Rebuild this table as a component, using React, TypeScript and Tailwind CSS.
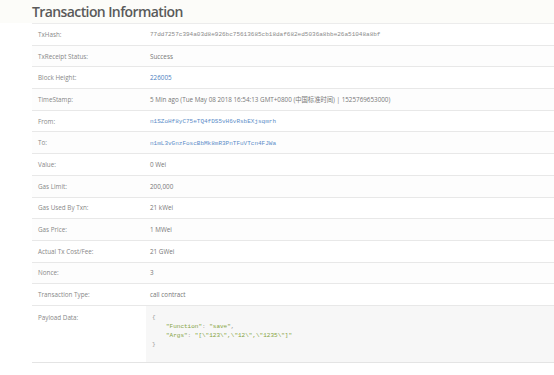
import React from 'react';

type Row = { label: string; value: string; kind?: 'text' | 'mono' | 'link' | 'linkText' };

const rows: Row[] = [
  { label: 'TxHash:', value: '77dd7257c394a03d8e926bc75613685cb18daf682ed5036a8bbe26a51048a8bf', kind: 'mono' },
  { label: 'TxReceipt Status:', value: 'Success' },
  { label: 'Block Height:', value: '226005', kind: 'linkText' },
  { label: 'TimeStamp:', value: '5 Min ago (Tue May 08 2018 16:54:13 GMT+0800 (中国标准时间) | 1525769653000)' },
  { label: 'From:', value: 'n1SZoHf8yC75eTQ4fDS5vH6vRsbEXjsqmrh', kind: 'link' },
  { label: 'To:', value: 'n1mL3vGnzFoscBbMk8mR3PnTFuVTcn4FJWa', kind: 'link' },
  { label: 'Value:', value: '0 Wei' },
  { label: 'Gas Limit:', value: '200,000' },
  { label: 'Gas Used By Txn:', value: '21 kWei' },
  { label: 'Gas Price:', value: '1 MWei' },
  { label: 'Actual Tx Cost/Fee:', value: '21 GWei' },
  { label: 'Nonce:', value: '3' },
  { label: 'Transaction Type:', value: 'call contract' },
];

const sans = "font-['Open_Sans','Noto_Sans_CJK_SC',sans-serif]";

export default function App() {
  return (
    <div className={`w-[554px] h-[375px] overflow-hidden bg-white ${sans}`}>
      {/* header */}
      <div className="h-[23px] bg-[#fcfcf9] pl-[32px] pt-[2px]">
        <h1 className="text-[14px] leading-[19px] font-semibold text-[#5a5a5a] tracking-[-0.6px]">Transaction Information</h1>
      </div>

      <div className="ml-[32px] border-t border-[#ececec]">
        {rows.map((r, i) => (
          <div
            key={r.label}
            className={`flex h-[21.7px] items-center border-b border-[#e8e8e8] text-[6.3px] leading-[9px] ${i % 2 === 0 ? 'bg-white' : 'bg-[#fdfdfd]'}`}
          >
            <div className="w-[114px] pl-[6px] text-[#888]">{r.label}</div>
            <div className="pl-[4px]">
              {r.kind === 'mono' && (
                <span className="font-['Liberation_Mono',monospace] text-[6px] text-[#8a8a8a]">{r.value}</span>
              )}
              {r.kind === 'link' && (
                <span className="font-['Liberation_Mono',monospace] text-[6px] text-[#5b8cc8]">{r.value}</span>
              )}
              {r.kind === 'linkText' && <span className="text-[#4a7ec0]">{r.value}</span>}
              {!r.kind && <span className="text-[#777]">{r.value}</span>}
            </div>
          </div>
        ))}

        {/* payload */}
        <div className="flex h-[57px] border-b border-[#e4e4e4]">
          <div className="w-[114px] pl-[6px] pt-[7px] text-[6.3px] leading-[9px] text-[#888]">Payload Data:</div>
          <div className="flex-1 bg-[#f7f7f7] pl-[6px] pt-[7px] font-['Liberation_Mono',monospace] text-[6px] leading-[9px] text-[#999]">
            <div>{'{'}</div>
            <div className="pl-[14px]">
              <span className="text-[#86a442]">"Function"</span>: <span className="text-[#86a442]">"save"</span>,
            </div>
            <div className="pl-[14px]">
              <span className="text-[#86a442]">"Args"</span>: <span className="text-[#86a442]">{'"[\\"123\\",\\"12\\",\\"1235\\"]"'}</span>
            </div>
            <div>{'}'}</div>
          </div>
        </div>
      </div>
    </div>
  );
}
